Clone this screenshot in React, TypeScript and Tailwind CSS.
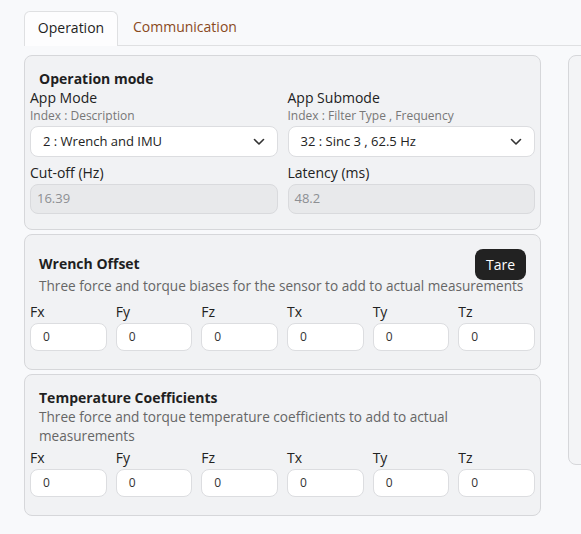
import React from 'react'

const font = { fontFamily: '"Open Sans", "Noto Sans", sans-serif' }

function Chevron() {
  return (
    <svg width="12" height="8" viewBox="0 0 12 8" fill="none" className="shrink-0">
      <path d="M1.5 1.5 6 6l4.5-4.5" stroke="#333" strokeWidth="1.6" strokeLinecap="round" strokeLinejoin="round" />
    </svg>
  )
}

function SelectBox({ value }: { value: string }) {
  return (
    <div className="mt-[2px] flex h-[31px] items-center justify-between rounded-lg border border-[#dcdde0] bg-white pl-3 pr-3 text-[13px] text-[#222]">
      <span>{value}</span>
      <Chevron />
    </div>
  )
}

function ReadOnly({ value }: { value: string }) {
  return (
    <div className="mt-px flex h-[30px] items-center rounded-lg border border-[#d9dadd] bg-[#e8e9eb] pl-[6px] text-[13px] text-[#8d8f93]">
      {value}
    </div>
  )
}

const axes = ['Fx', 'Fy', 'Fz', 'Tx', 'Ty', 'Tz']

function AxisRow() {
  return (
    <div className="grid grid-cols-6 gap-x-[9px]">
      {axes.map(a => (
        <div key={a}>
          <div className="text-[14px] leading-5 text-[#222]">{a}</div>
          <div className="mt-px flex h-[28px] items-center rounded-lg border border-[#dcdde0] bg-white px-3 text-[12px] text-[#333]">
            0
          </div>
        </div>
      ))}
    </div>
  )
}

export default function App() {
  return (
    <div className="h-[534px] w-[581px] overflow-hidden bg-[#f8f9fb]" style={font}>
      {/* Tabs */}
      <div className="flex pt-[11px]">
        <div className="w-6 shrink-0" />
        <div className="flex h-[35px] w-[94px] items-center justify-center rounded-t-md border border-b-0 border-[#dfe0e2] bg-[#fdfdfe] pb-[3px] text-[14px] text-[#1f1f1f]">
          Operation
        </div>
        <div className="flex flex-1 items-center border-b border-[#dfe0e2] pb-[3px] pl-[15px] text-[14px] text-[#8a4a1d]">
          Communication
        </div>
      </div>

      <div className="flex gap-[27px] pl-6 pt-[9px]">
        <div className="flex w-[517px] shrink-0 flex-col gap-1">
          {/* Operation mode */}
          <div className="rounded-lg border border-[#d6d7da] bg-[#f1f2f4] px-[5px] pb-[15px] pt-[15px]">
            <div className="pl-[9px] text-[14px] font-bold leading-4 text-[#1f1f1f]">Operation mode</div>
            <div className="mt-px grid grid-cols-2 gap-x-[10px]">
              <div>
                <div className="text-[14px] leading-5 text-[#222]">App Mode</div>
                <div className="text-[12px] leading-4 text-[#777]">Index : Description</div>
                <SelectBox value="2 : Wrench and IMU" />
                <div className="mt-[6px] text-[14px] leading-5 text-[#222]">Cut-off (Hz)</div>
                <ReadOnly value="16.39" />
              </div>
              <div>
                <div className="text-[14px] leading-5 text-[#222]">App Submode</div>
                <div className="text-[12px] leading-4 text-[#777]">Index : Filter Type , Frequency</div>
                <SelectBox value="32 : Sinc 3 , 62.5 Hz" />
                <div className="mt-[6px] text-[14px] leading-5 text-[#222]">Latency (ms)</div>
                <ReadOnly value="48.2" />
              </div>
            </div>
          </div>

          {/* Wrench offset */}
          <div className="rounded-lg border border-[#d6d7da] bg-[#f1f2f4] px-[5px] pb-[18px] pt-[14px]">
            <div className="flex items-center justify-between pl-[9px] pr-[9px]">
              <div className="mb-[3px] text-[14px] font-bold text-[#1f1f1f]">Wrench Offset</div>
              <button className="h-[31px] rounded-lg bg-[#222222] px-[11px] text-[14px] text-white">Tare</button>
            </div>
            <div className="mt-[-4px] pl-[9px] text-[13.6px] leading-5 text-[#666]">
              Three force and torque biases for the sensor to add to actual measurements
            </div>
            <div className="mt-[6px]">
              <AxisRow />
            </div>
          </div>

          {/* Temperature coefficients */}
          <div className="rounded-lg border border-[#d6d7da] bg-[#f1f2f4] px-[5px] pb-[18px] pt-[14px]">
            <div className="pl-[9px] text-[14px] font-bold leading-[18px] text-[#1f1f1f]">Temperature Coefficients</div>
            <div className="pl-[9px] pr-[60px] text-[13.6px] leading-[19px] text-[#666]">
              Three force and torque temperature coefficients to add to actual measurements
            </div>
            <div className="mt-[3px]">
              <AxisRow />
            </div>
          </div>
        </div>

        <div className="h-[410px] w-[300px] shrink-0 rounded-lg border border-[#d6d7da] bg-[#f3f4f6]" />
      </div>
    </div>
  )
}
